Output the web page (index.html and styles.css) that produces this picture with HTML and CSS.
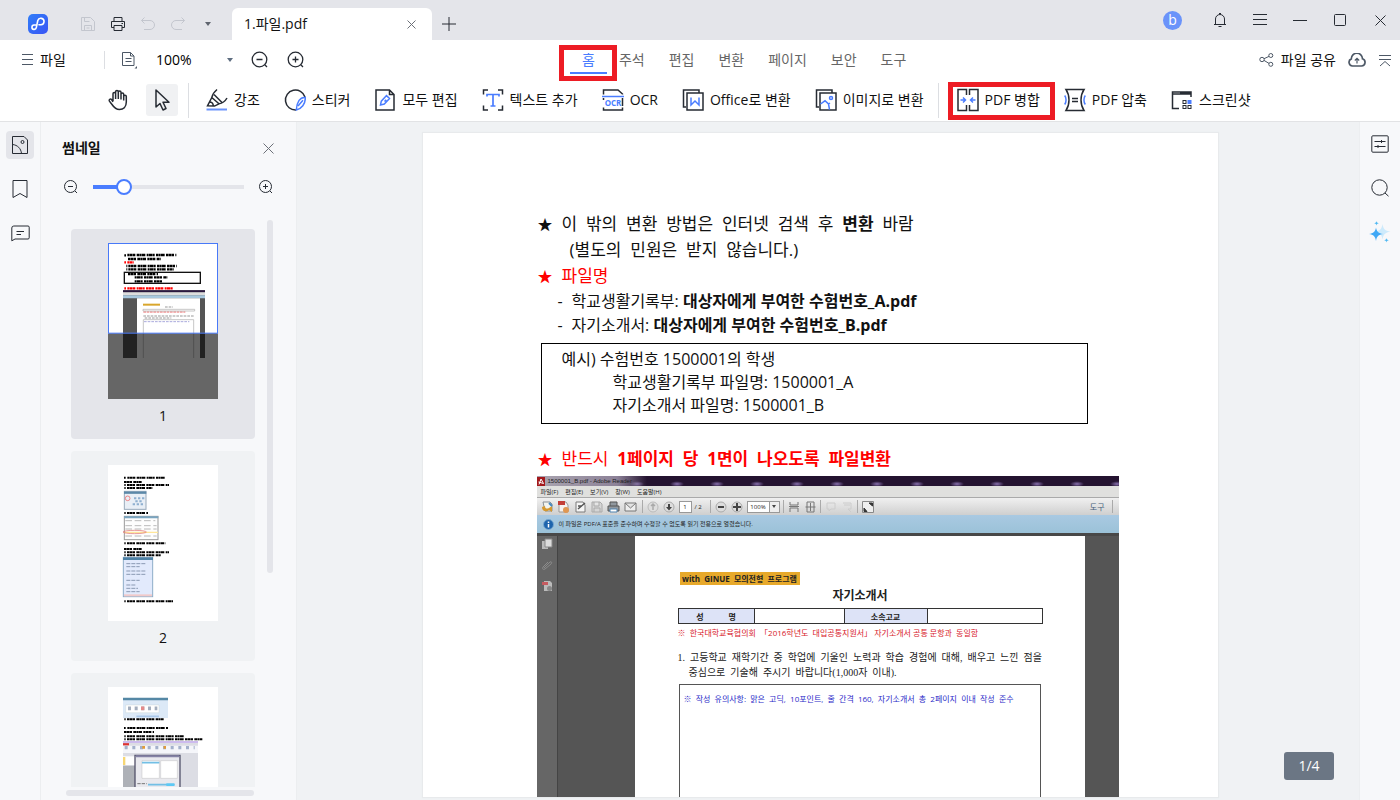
FILE: index.html
```html
<!DOCTYPE html>
<html lang="ko">
<head>
<meta charset="utf-8">
<title>1.파일.pdf</title>
<link rel="stylesheet" href="styles.css">
</head>
<body>
<div class="app">
  <header class="titlebar">
    <div class="quick">
      <svg class="logo" width="20" height="20" viewBox="0 0 20 20"><defs><linearGradient id="lg" x1="0" y1="0" x2="1" y2="1"><stop offset="0" stop-color="#2f7df8"/><stop offset="1" stop-color="#3a55f5"/></linearGradient></defs><rect width="20" height="20" rx="5" fill="url(#lg)"/><path d="M7.800 11H6a2.200 2.200 0 1 0 2.300 2.600L9.800 6.500a3.200 3.200 0 1 1 3.200 4.200H11" fill="none" stroke="#fff" stroke-width="1.600" stroke-linecap="round"/></svg>
      <button class="qbtn" aria-label="저장"><svg width="16" height="16" viewBox="0 0 16 16" class="faint"><path d="M1.500 14.500v-13h9l4 4v9zM4.500 1.500v4h5M4.500 14.500v-5h7v5M6.500 12h3"/></svg></button>
      <button class="qbtn" aria-label="인쇄"><svg width="16" height="16" viewBox="0 0 16 16" class="dark"><path d="M4 5V1.500h8V5M4 11.500H1.500V5.500h13v6H12M4 9.500h8v5H4zM11.500 7.500h1.500"/></svg></button>
      <button class="qbtn" aria-label="실행 취소"><svg width="16" height="16" viewBox="0 0 16 16" class="faint"><path d="M4.500 1.500 1.500 4.500l3 3M1.500 4.500H10a4 4 0 0 1 0 9H4"/></svg></button>
      <button class="qbtn" aria-label="다시 실행"><svg width="16" height="16" viewBox="0 0 16 16" class="faint"><path d="m11.500 1.500 3 3-3 3M14.500 4.500H6a4 4 0 0 0 0 9h6"/></svg></button>
      <button class="qbtn" aria-label="더 보기"><svg width="6" height="4" viewBox="0 0 6 4"><path d="M0 0h6L3 4z" fill="#5e646e"/></svg></button>
    </div>
    <div class="doctab"><span>1.파일.pdf</span><button class="plain" aria-label="탭 닫기"><svg width="9" height="9" viewBox="0 0 9 9" class="grey"><path d="m.5.5 8 8M8.500.5l-8 8"/></svg></button></div>
    <button class="newtab" aria-label="새 탭"><svg width="14" height="14" viewBox="0 0 14 14" class="dark"><path d="M7 0v14M0 7h14"/></svg></button>
    <div class="winbtns">
      <button class="avatar">b</button>
      <button class="wbtn" aria-label="알림"><svg width="14" height="16" viewBox="0 0 14 16" class="dark"><path d="M2.500 12.500V7a4.500 4.500 0 0 1 9 0v5.500M1 12.500h12M5.500 14.500h3M6 1.500h2"/></svg></button>
      <button class="wbtn" aria-label="메뉴"><svg width="14" height="12" viewBox="0 0 14 12" class="dark"><path d="M0 .5h14M0 5.500h14M0 10.500h14"/></svg></button>
      <button class="wbtn" aria-label="최소화"><svg width="14" height="12" viewBox="0 0 14 12" class="dark"><path d="M0 6.500h14"/></svg></button>
      <button class="wbtn" aria-label="최대화"><svg width="12" height="12" viewBox="0 0 12 12" class="dark"><rect x=".5" y=".5" width="11" height="11" rx="1"/></svg></button>
      <button class="wbtn" aria-label="닫기"><svg width="11" height="11" viewBox="0 0 11 11" class="dark"><path d="m.5.5 10 10M10.500.5l-10 10"/></svg></button>
    </div>
  </header>

  <div class="menurow">
    <div class="menuleft">
      <button class="filebtn"><svg width="11" height="12" viewBox="0 0 11 12" class="slate"><path d="M0 .5h11M0 5.500h11M0 10.500h11"/></svg>파일</button>
      <span class="vline"></span>
      <button class="plain viewmode" aria-label="보기"><svg width="17" height="18" viewBox="0 0 17 18" class="slate"><path d="M1.500 1.500h8l3.500 3.500v9.500h-11.500zM9.500 1.500V5H13M4.500 7.500h6M4.500 10.500h6"/><path d="M16 15v2.500h-2.500z" fill="#4d5866" stroke="none"/></svg></button>
      <span class="zoombox"><select aria-label="배율"><option>100%</option></select><svg width="6" height="4" viewBox="0 0 6 4"><path d="M0 0h6L3 4z" fill="#5e6d80"/></svg></span>
      <button class="plain zbtn" aria-label="축소"><svg width="18" height="18" viewBox="0 0 18 18" class="dark z"><circle cx="8.500" cy="8.500" r="7.300"/><path d="M5.500 8.500h6M13.800 13.800 16 16"/></svg></button>
      <button class="plain zbtn" aria-label="확대"><svg width="18" height="18" viewBox="0 0 18 18" class="dark z"><circle cx="8.500" cy="8.500" r="7.300"/><path d="M5.500 8.500h6M8.500 5.500v6M13.800 13.800 16 16"/></svg></button>
    </div>
    <nav class="tabs">
      <button class="tab active">홈<span class="mark"></span></button>
      <button class="tab">주석</button>
      <button class="tab">편집</button>
      <button class="tab">변환</button>
      <button class="tab">페이지</button>
      <button class="tab">보안</button>
      <button class="tab">도구</button>
    </nav>
    <div class="menuright">
      <button class="share"><svg width="15" height="14" viewBox="0 0 15 14" class="slate"><circle cx="3" cy="6.500" r="2.200"/><circle cx="11.800" cy="2.500" r="2"/><circle cx="11.800" cy="11.300" r="2"/><path d="m5 5.700 5-2.300M5 7.400l5 3"/></svg>파일 공유</button>
      <button class="plain" aria-label="클라우드"><svg width="18" height="14" viewBox="0 0 18 14" class="cloud"><path d="M4.500 13A3.700 3.700 0 0 1 3.300 5.900 5.600 5.600 0 0 1 14.500 5.800 3.700 3.700 0 0 1 13.500 13z"/><path d="M9 10.500v-5M6.800 7.500 9 5.300l2.200 2.200" stroke-width="1.200"/></svg></button>
      <button class="plain" aria-label="리본 접기"><svg width="14" height="13" viewBox="0 0 14 13" class="slate"><path d="M1 1.500h12M1 5.500h12M2 12l5-4.500 5 4.500"/></svg></button>
    </div>
  </div>

  <div class="toolrow">
    <button class="mode" aria-label="손 도구"><svg width="22" height="22" viewBox="0 0 22 22" class="dark t"><path d="M6 12V4.800a1.300 1.300 0 0 1 2.600 0V10 2.800a1.300 1.300 0 0 1 2.700 0V10 3.300a1.300 1.300 0 0 1 2.700 0V10.500 5.300a1.300 1.300 0 0 1 2.700 0V11.500M16.700 7.500a1.300 1.300 0 0 1 2.600 0V13c0 5-3 7.500-6.800 7.500-4 0-5.500-2-7.500-5l-2.600-3.400c-.9-1.400 1-2.700 2.200-1.600L6 12.800"/></svg></button>
    <button class="mode on" aria-label="선택 도구"><svg width="20" height="24" viewBox="0 0 20 24" class="dark t"><path d="M4 2v17l4-3.500 3 6.500 3-1.500-3-6.300h6z" stroke-linejoin="round"/></svg></button>
    <span class="vline tall"></span>
    <div class="tools">
      <button class="tool"><svg width="22" height="24" viewBox="0 0 22 24" class="dark t"><path d="M11 1.500C8 4 6.500 6.500 5.800 9.500L13 15.800c3-.3 6-2.300 8-5.800M5.800 9.500 1.500 17.800l7 .3 4.500-2.300M8 6.500l8 8M4 14c2 .3 3.300 1.800 3.300 4"/><path d="M.5 21.500h20.500" stroke="#6a93fa" stroke-width="2"/></svg>강조</button>
      <button class="tool"><svg width="22" height="24" viewBox="0 0 22 24" class="dark t"><path d="M21 9A10 10 0 1 0 12 22"/><path d="M21.300 9.500c-5-.8-8.600 4.500-9 12.400C17.500 21 21.500 16 21.300 9.500zM14 18l5-5.800" stroke="#4a7dff"/></svg>스티커</button>
      <button class="tool"><svg width="22" height="24" viewBox="0 0 22 24" class="dark t"><path d="M2 2h13.500L20 6.500V22H2zM15.500 2v4.500H20"/><path d="m6.500 17 .8-3.800 5.200-5.600 3 2.900-5.200 5.600zM10.500 13.500l1.700-1.800" stroke="#4a7dff"/></svg>모두 편집</button>
      <button class="tool"><svg width="22" height="24" viewBox="0 0 22 24" class="dark t"><path d="M6 2H1.500v4.500M16 2h4.500v4.500M6 22H1.500v-4.500M16 22h4.500v-4.500"/><path d="M5 8.500v-2h12v2M11 6.500V18M8.500 18h5" stroke="#4a7dff" stroke-width="1.700"/></svg>텍스트 추가</button>
      <button class="tool"><svg width="22" height="24" viewBox="0 0 22 24" class="dark t"><path d="M1.500 6.500V2H16l4.500 4v.5M1.500 19.500V22h19v-2.500M1.500 10v2M20.500 10v8"/><path d="M0 8.500h22" stroke="#4a7dff"/><text x="11" y="17.500" text-anchor="middle" class="ocr">OCR</text></svg>OCR</button>
      <button class="tool"><svg width="22" height="24" viewBox="0 0 22 24" class="dark t"><path d="M4 19H1.500V2H17v2.500M5 5h16v17H5z"/><path d="M9 9.500V17l4-4 4 4V9.500" stroke="#4a7dff"/></svg>Office로 변환</button>
      <button class="tool"><svg width="22" height="24" viewBox="0 0 22 24" class="dark t"><path d="M4 19H1.500V2H17v2.500M5 5h16v17H5z"/><path d="M5.500 16 10 12.800l3.500 3.200 1 5.500M13.500 16l1.500-1" stroke="#4a7dff"/><circle cx="16" cy="10" r="1.500" stroke="#4a7dff"/></svg>이미지로 변환</button>
    </div>
    <span class="vline tall"></span>
    <div class="tools second">
      <button class="tool merge"><svg width="22" height="24" viewBox="0 0 22 24" class="dark t"><path d="M9.500 7V1.500H1v21h8.500V17M12.500 7V1.500H21v21h-8.500V17"/><path d="M3.500 12h5M6 9.500 8.500 12 6 14.500M18.500 12h-5M16 9.500 13.500 12l2.500 2.500" stroke="#4a7dff"/></svg>PDF 병합<span class="mark"></span></button>
      <button class="tool"><svg width="22" height="24" viewBox="0 0 22 24" class="dark t"><path d="M2 1.500h18c-4 6-4 15 0 21H2c4-6 4-15 0-21zM8 10.500h6M8 13.500h6"/><path d="M.7 7.500c1.800 2.500 1.800 6.500 0 9M21.300 7.500c-1.800 2.500-1.800 6.500 0 9" stroke="#4a7dff"/></svg>PDF 압축</button>
      <button class="tool"><svg width="22" height="24" viewBox="0 0 22 24" class="dark t"><path d="M8 20.500H1.500V4h18.500v5M1.500 6h18.500"/><path d="M9 5h11" stroke-width="2"/><g stroke-width="1"><rect x="12" y="12.500" width="3" height="3"/><rect x="12" y="17.500" width="3" height="3"/><rect x="17" y="17.500" width="3" height="3"/></g><rect x="16.500" y="12" width="4" height="4" fill="#4a7dff" stroke="none"/></svg>스크린샷</button>
    </div>
  </div>

  <main class="body">
    <aside class="rail">
      <button class="rbtn on" aria-label="썸네일"><svg width="18" height="20" viewBox="0 0 18 20" class="dark"><path d="M1.500 1.500H13L16.500 5v13.500h-15zM1.500 9.500c5 .5 8.500 4 9 9"/><circle cx="11.500" cy="7" r="1.500"/></svg></button>
      <button class="rbtn" aria-label="책갈피"><svg width="18" height="20" viewBox="0 0 18 20" class="dark"><path d="M2 1.500h14v17l-7-4-7 4z"/></svg></button>
      <button class="rbtn" aria-label="주석"><svg width="19" height="17" viewBox="0 0 19 17" class="dark"><path d="M.8 15.800V3a2 2 0 0 1 2-2H17a1.200 1.200 0 0 1 1.200 1.200v10.600A1.200 1.200 0 0 1 17 14H4zM5.500 6.500H13M5.500 9.500H10"/></svg></button>
    </aside>
    <section class="panel">
      <div class="phead"><h2>썸네일</h2><button class="plain" aria-label="패널 닫기"><svg width="11" height="11" viewBox="0 0 11 11" class="grey"><path d="m.5.5 10 10M10.500.5l-10 10"/></svg></button></div>
      <div class="pslide">
        <button class="plain" aria-label="썸네일 축소"><svg width="16" height="16" viewBox="0 0 16 16" class="dark"><circle cx="7.500" cy="7.500" r="6"/><path d="M5 7.500h5M12 12l2 2"/></svg></button>
        <input type="range" aria-label="썸네일 크기" min="0" max="100" value="17">
        <button class="plain" aria-label="썸네일 확대"><svg width="16" height="16" viewBox="0 0 16 16" class="dark"><circle cx="7.500" cy="7.500" r="6"/><path d="M5 7.500h5M7.500 5v5M12 12l2 2"/></svg></button>
      </div>
      <div class="plist">
        <div class="card on">
          <svg width="110" height="156" viewBox="0 0 330 468">
            <rect width="330" height="468" fill="#fff"/>
            <g fill="none" stroke="#000" stroke-width="7" stroke-dasharray="6 1 9 1 7 4 8 1 5 1 11 4"><path d="M58 36h147M60 48h98M61 69h146M61 79h136M60 93h90M80 103h98M80 115h86"/><path d="M49 37h5M55 69h3M55 79h3"/></g>
            <g fill="none" stroke="red" stroke-width="7"><path d="M58 58h19M49 58h5M58 136h137M49 136h5" stroke-dasharray="6 1 9 1 7 4"/></g>
            <rect x="49" y="88" width="228" height="33" fill="none" stroke="#111" stroke-width="4"/>
            <path d="M45 142h246v203H45z" fill="#555"/><path d="M45 142h246v6H45z" fill="#2b1840"/><path d="M45 148h246v9H45z" fill="#ddd"/><path d="M45 157h246v9H45z" fill="#a8c8de"/>
            <path d="M87 166h189v179H87z" fill="#fff"/><path d="M105 182h51v6h-51z" fill="#d9a62c"/>
            <path d="M106 207h126" stroke="#e66" stroke-width="3" stroke-dasharray="8 2"/><path d="M106 219h152M110 225h80M171 192h24" stroke="#999" stroke-width="3" stroke-dasharray="8 3"/><path d="M108 236h136" stroke="#aad" stroke-width="3" stroke-dasharray="8 3"/>
            <path d="M105 199h155v5H105zM106 345V230h151v115" fill="none" stroke="#aaa" stroke-width="2"/>
            <path d="M0 271h330v197H0z" fill="#000" fill-opacity=".6"/>
            <rect x="1.500" y="1.500" width="327" height="269" fill="none" stroke="#4879f8" stroke-width="3"/>
          </svg>
          <span>1</span>
        </div>
        <div class="card">
          <svg width="110" height="156" viewBox="0 0 330 468">
            <rect width="330" height="468" fill="#fff"/>
            <g fill="none" stroke="#000" stroke-width="6" stroke-dasharray="6 1 9 1 7 4 8 1 5 1 11 4"><path d="M58 38h114M48 51h53M57 60h126M57 69h76M57 144h63M57 235h117M48 252h53M57 262h126M57 271h102M57 409h138"/></g>
            <path d="M48 38h5M49 60h4M49 69h4M49 144h4M49 235h4M49 262h4M49 271h4M49 409h4" stroke="#000" stroke-width="6"/>
            <rect x="49" y="79" width="65" height="54" fill="#e9eff6" stroke="#9ab" stroke-width="3"/><path d="M48 83h67" stroke="#5b88a8" stroke-width="7"/><circle cx="59" cy="100" r="7" fill="none" stroke="#e55" stroke-width="2"/><path d="M78 100h32M74 118h36M82 109h24" stroke="#8fb0d0" stroke-width="6" stroke-dasharray="7 5"/>
            <rect x="49" y="154" width="101" height="70" fill="#fdfdfd" stroke="#999" stroke-width="3"/><path d="M48 157h103" stroke="#7aa5c0" stroke-width="6"/><path d="M52 182h94M52 192h94M52 213h94M52 167h90" stroke="#999" stroke-width="2" stroke-dasharray="20 8"/><path d="M50 202h100" stroke="#ffe69a" stroke-width="4"/><ellipse cx="80" cy="201" rx="35" ry="5" fill="none" stroke="#d66" stroke-width="2"/>
            <rect x="46" y="277" width="88" height="118" fill="#e2eafc" stroke="#8eadc8" stroke-width="3"/><path d="M45 281h90" stroke="#4d81a5" stroke-width="8"/><path d="M55 296h60M55 305h40M55 318h60M55 328h60M55 346h40M55 360h30M55 370h35M55 380h40" stroke="#8a99b3" stroke-width="3" stroke-dasharray="12 3"/><path d="M48 391h84" stroke="#f1caca" stroke-width="6"/>
          </svg>
          <span>2</span>
        </div>
        <div class="card">
          <svg width="110" height="156" viewBox="0 0 330 468">
            <rect width="330" height="468" fill="#fff"/>
            <path d="M45 33h135v60H45z" fill="#dce9f7"/><path d="M45 36h135" stroke="#5588a5" stroke-width="7"/><path d="M53 54h100v23H53z" fill="#fff" stroke="#bcc"/><path d="M60 64h88" stroke="#a3adbd" stroke-width="11" stroke-dasharray="9 11"/><path d="M99 64h10" stroke="#e38a8a" stroke-width="11"/><path d="M85 88h68" stroke="#aac8ea" stroke-width="5"/>
            <g fill="none" stroke="#000" stroke-width="6" stroke-dasharray="6 1 9 1 7 4 8 1 5 1 11 4"><path d="M57 97h110M58 123h123M48 135h90M57 148h174M57 157h226"/></g>
            <path d="M49 97h4M48 123h5M49 148h4M49 157h4" stroke="#000" stroke-width="6"/>
            <path d="M45 162h225v140H45z" fill="#dcdde4"/><path d="M45 165h225" stroke="#cdbbee" stroke-width="6"/><path d="M45 172h18" stroke="#d33" stroke-width="7"/><path d="M45 176h225v22H45z" fill="#f5f6fa"/><path d="M50 182h210" stroke="#a3b0cb" stroke-width="10" stroke-dasharray="9 14"/><path d="M103 181h8M167 181h7" stroke="#e29b37" stroke-width="8"/>
            <path d="M45 208h36v27H45z" fill="#fff"/><path d="M45 210h7v24h-7z" fill="#f7d774"/><path d="M45 236h36v64H45z" fill="#aeb1b7"/><path d="M81 205h135v97H81z" fill="#e9e9ee" stroke="#55546c" stroke-width="4"/><path d="M83 208h131" stroke="#8683a6" stroke-width="6"/><path d="M102 221h52v53h-52zM158 221h50v53h-50z" fill="#fff" stroke="#aaa"/><path d="M102 227h52M120 293h80" stroke="#72bfe5" stroke-width="5"/><path d="M88 290h28" stroke="#777" stroke-width="3" stroke-dasharray="10 3"/><path d="M175 293h24" stroke="#5cc9f5" stroke-width="8"/>
          </svg>
        </div>
      </div>
      <span class="vbar"></span><span class="hbar"></span>
    </section>

    <section class="viewer">
      <article class="page">
        <p class="l1"><span class="star">★</span>이  밖의  변환  방법은  인터넷  검색  후  <b>변환</b>  바람</p>
        <p class="l1 sub">(별도의  민원은  받지  않습니다.)</p>
        <p class="l1 red"><span class="star">★</span>파일명</p>
        <p class="l2"><span class="dash">-</span>학교생활기록부: <b>대상자에게 부여한 수험번호_A.pdf</b></p>
        <p class="l2"><span class="dash">-</span>자기소개서: <b>대상자에게 부여한 수험번호_B.pdf</b></p>
        <div class="example">
          <p>예시) 수험번호 1500001의 학생</p>
          <p class="in">학교생활기록부 파일명: 1500001_A</p>
          <p class="in">자기소개서 파일명: 1500001_B</p>
        </div>
        <p class="l1 red must"><span class="star">★</span>반드시  <b>1페이지  당  1면이  나오도록  파일변환</b></p>

        <div class="shot">
          <div class="stitle"><svg width="8" height="9" viewBox="0 0 8 9"><path d="M0 0h8v9H0z" fill="#a3191c"/><path d="M2 7.500 4 2l2.500 4.500L1.500 5" fill="none" stroke="#fff"/></svg>1500001_B.pdf - Adobe Reader</div>
          <div class="smenu"><span>파일(F)</span><span>편집(E)</span><span>보기(V)</span><span>창(W)</span><span>도움말(H)</span></div>
          <div class="stools">
            <svg width="98" height="14" viewBox="0 0 98 14" fill="none"><path d="M2 2h7l2 2v7H4z" fill="#f3f4ee" stroke="#8a8f94"/><path d="M1 7c0 5 5 5 7 3l3 2V6L8 8C6 9 4 9 4 6z" fill="#d5982f"/><path d="M8 3l3 3" stroke="#4488c0" stroke-width="2"/><path d="M18 2h7l2 3v7h-9z" fill="#f6f1ee" stroke="#999"/><path d="M17 1h7v4h-7z" fill="#c33e38"/><circle cx="25" cy="10" r="3" fill="#e09752"/><path d="M35 2h7l2 3v7h-9z" fill="#f5f5f5" stroke="#7a7a7a"/><path d="m37 9 7-6M37 6h4" stroke="#555" stroke-width="1.500"/><path d="M51 2h8l2 2v8H51zM53 2v4h5V2M53 12V8h6v4" fill="#d5d5d5" stroke="#aaa"/><path d="M67 6h11v5H67zM69 6V2h7v4" fill="#90989f" stroke="#555"/><path d="M69 9h7v3h-7z" fill="#fff" stroke="#4f83b0"/><path d="M84 3h11v8H84zM84 3l5.500 5L95 3" fill="#eee" stroke="#777"/></svg>
            <span class="sep"></span>
            <svg width="30" height="14" viewBox="0 0 30 14"><circle cx="7" cy="7" r="5" fill="#dedede" stroke="#bbb"/><path d="M7 4v6M5 6l2-2 2 2" fill="none" stroke="#aaa" stroke-width="1.500"/><circle cx="23" cy="7" r="5" fill="#ddd" stroke="#aaa"/><path d="M22 4h2v3h2l-3 3.500L20 7h2z" fill="#444"/></svg>
            <span class="num">1</span><span class="of">/ 2</span>
            <span class="sep"></span>
            <svg width="30" height="14" viewBox="0 0 30 14"><circle cx="7" cy="7" r="5" fill="#ddd" stroke="#aaa"/><path d="M4 7h6" stroke="#444" stroke-width="2"/><circle cx="23" cy="7" r="5" fill="#ddd" stroke="#aaa"/><path d="M19 7h8M23 3v8" stroke="#444" stroke-width="2"/></svg>
            <span class="pct">100%</span><span class="drop"><svg width="4" height="3" viewBox="0 0 4 3"><path d="M0 0h4L2 3z" fill="#444"/></svg></span>
            <span class="sep"></span>
            <svg width="30" height="14" viewBox="0 0 30 14" fill="none" stroke="#777"><path d="M3 2v3h8V2M3 12V8h8v4M2 6.500h10M20 2h7v10h-7zM18.500 7h10M23.500 3v8"/></svg>
            <span class="sep"></span>
            <svg width="30" height="14" viewBox="0 0 30 14" fill="none" stroke="#ccc"><path d="M3 3h8v6H7l-2 2V9H3zM19 3h8v6h-3l3 3M20 5h6"/></svg>
            <span class="sep"></span>
            <svg width="14" height="14" viewBox="0 0 14 14"><path d="M1.500 1.500h11v11h-11z" fill="#eee" stroke="#888"/><path d="M8 3h3.500v3zM3 8v3.500h3z" fill="#333" stroke="#333"/></svg>
            <span class="stool">도구</span><span class="sep"></span>
          </div>
          <div class="sinfo"><svg width="11" height="11" viewBox="0 0 11 11"><circle cx="5.500" cy="5.500" r="5" fill="#1d64ad" stroke="#7aa9d0"/><path d="M5.500 5v3.500M5.500 2.500V4" stroke="#fff" stroke-width="1.500"/></svg>이 파일은 PDF/A 표준을 준수하며 수정할 수 없도록 읽기 전용으로 열렸습니다.</div>
          <div class="sbody">
            <div class="sside">
              <svg width="12" height="12" viewBox="0 0 12 12"><path d="M1 3h6v8H1z" fill="#bbb"/><path d="M4 1h7v8H4z" fill="#ddd" stroke="#888"/></svg>
              <svg width="12" height="12" viewBox="0 0 12 12" fill="none" stroke="#8b8b8b"><path d="m3 9 6-6c2-1 2 1 1 2l-6 5c-2 1-3 0-2-2l5-5"/></svg>
              <svg width="12" height="12" viewBox="0 0 12 12"><path d="M3 1h6l2 2v8H3z" fill="#bbb"/><path d="M1 2h6v3H1z" fill="#c65b60"/><circle cx="8.500" cy="8.500" r="2.500" fill="#888"/></svg>
            </div>
            <div class="form">
              <span class="badge">with  GINUE  모의전형  프로그램</span>
              <h3>자기소개서</h3>
              <table><tr><th>성            명</th><td></td><th>소속고교</th><td></td></tr></table>
              <p class="rnote">※  한국대학교육협의회  「2016학년도  대입공통지원서」 자기소개서 공통 문항과  동일함</p>
              <p class="q">1.  고등학교  재학기간  중  학업에  기울인  노력과  학습  경험에  대해,  배우고  느낀  점을</p>
              <p class="q q2">중심으로  기술해  주시기  바랍니다(1,000자  이내).</p>
              <div class="answer">※  작성  유의사항:  맑은  고딕,  10포인트,  줄  간격  160,  자기소개서  총  2페이지  이내  작성  준수</div>
            </div>
          </div>
        </div>
      </article>
      <span class="counter">1/4</span>
    </section>

    <aside class="rail right">
      <button class="rbtn" aria-label="속성"><svg width="18" height="18" viewBox="0 0 18 18" class="dark"><rect x=".8" y=".8" width="16.400" height="16.400" rx="1"/><path d="M3.500 6.500h11M10.500 5v3M3.500 11.500h11M7 10v3"/></svg></button>
      <button class="rbtn" aria-label="검색"><svg width="18" height="18" viewBox="0 0 18 18" class="dark"><circle cx="8.500" cy="8.500" r="7.700"/><path d="m14 14 3.500 3.200"/></svg></button>
      <button class="rbtn" aria-label="AI"><svg width="22" height="22" viewBox="0 0 22 22"><path d="M13.500 3c.8 5 2.500 7 8 7.500-5.500 1-7.200 3-8 8-.8-5-2.500-7-8-8 5.500-.5 7.200-2.500 8-7.500z" fill="#cdeafb"/><path d="M7 6.500c.7 4 2.500 5.800 7 6.500-4.500.7-6.300 2.500-7 7-.7-4.500-2.500-6.300-7-7 4.500-.7 6.300-2.500 7-6.500z" fill="#3fa8f5"/><path d="M7.500 0c.3 1.500.8 2 2.500 2.300-1.700.3-2.200.8-2.500 2.200-.3-1.400-.8-1.900-2.500-2.200C6.700 2 7.200 1.500 7.500 0zM17.500 17c.3 1.500.8 2 2.500 2.300-1.700.3-2.200.8-2.500 2.200-.3-1.400-.8-1.900-2.500-2.200 1.700-.3 2.200-.8 2.500-2.300z" fill="#4fb8f2"/></svg></button>
    </aside>
  </main>
</div>
</body>
</html>
```
FILE: styles.css
```css
* { box-sizing: border-box; }
body { margin: 0; font: 14px/20px "Open Sans", "Noto Sans CJK KR", sans-serif; color: #111; }
button { font: inherit; color: inherit; border: 0; background: none; padding: 0; display: flex; align-items: center; justify-content: center; white-space: nowrap; }
p, h2, h3 { margin: 0; }
svg { display: block; flex: none; }
.dark, .faint, .grey, .slate, .cloud { fill: none; stroke: #262b33; }
.t { stroke-width: 1.5; }
.z { stroke-width: 1.3; }
.faint { stroke: #c3c6ce; }
.grey { stroke: #6c7078; }
.slate { stroke: #4d5866; }
.cloud { stroke: #4d5866; stroke-width: 1.7; }
.ocr { font: bold 8px "Open Sans", sans-serif; fill: #4a7dff; stroke: none; }

.app { height: 100vh; display: flex; flex-direction: column; overflow: hidden; background: #fff; }

.titlebar { height: 40px; flex: none; display: flex; background: #e4e5ea; }
.quick { width: 232px; flex: none; display: flex; align-items: center; padding: 8px 0 0 28px; }
.logo { margin-right: 25px; }
.qbtn { width: 30px; height: 30px; flex: none; }
.doctab { width: 200px; margin-top: 8px; padding: 0 16px 0 12px; background: #fff; border-radius: 6px 6px 0 0; display: flex; align-items: center; justify-content: space-between; }
.newtab { width: 34px; padding-top: 8px; }
.winbtns { margin-left: auto; display: flex; align-items: center; }
.wbtn { width: 40px; height: 40px; }
.avatar { width: 19px; height: 19px; border-radius: 50%; background: #6a93fa; color: #fff; margin-right: 18px; }

.menurow { height: 40px; flex: none; display: grid; grid-template-columns: 570px auto 1fr; align-items: center; }
.menuleft { display: flex; align-items: center; padding-left: 22px; }
.filebtn { width: 82px; justify-content: flex-start; gap: 7px; }
.vline { width: 1px; height: 18px; background: #dcdee2; }
.viewmode { margin-left: 16px; }
.zoombox { display: flex; align-items: center; width: 77px; margin: 0 18px; }
.zoombox select { appearance: none; border: 0; padding: 0; background: none; font: inherit; color: #000; width: 71px; }
.zbtn { margin-right: 18px; }
.tabs { display: flex; height: 40px; }
.tab { position: relative; padding: 0 12px; color: #666; }
.tab.active { color: #4a7dff; box-shadow: inset 0 -6px #fff, inset 0 -8px #4a7dff; }
.mark { position: absolute; border: 5px solid #ed1c24; pointer-events: none; }
.tab .mark { inset: 5px -10px -1px -11px; }
.menuright { display: flex; align-items: center; justify-content: flex-end; gap: 12px; padding-right: 8px; }
.share { gap: 7px; }

.toolrow { height: 42px; flex: none; display: flex; align-items: center; padding: 0 8px 1px 102px; border-bottom: 1px solid #e2e3e5; }
.mode { width: 32px; height: 32px; border-radius: 3px; margin-right: 12px; }
.mode.on { background: #f0f1f3; margin-right: 10px; }
.vline.tall { height: 35px; }
.tools { display: flex; gap: 24px; padding: 0 14px 0 17px; }
.tools.second { padding-left: 18px; }
.tool { position: relative; gap: 6px; height: 34px; }
.merge .mark { inset: -1px -15px -3px -9px; }

.body { flex: 1; min-height: 0; display: flex; background: #f0f2f4; }
.rail { width: 41px; flex: none; background: #f7f8fa; border-right: 1px solid #eceef0; display: flex; flex-direction: column; align-items: center; gap: 16px; padding-top: 9px; }
.rail.right { border-right: 0; border-left: 1px solid #eceef0; padding-top: 8px; }
.rbtn { width: 28px; height: 28px; border-radius: 4px; }
.rbtn.on { background: #e4e5ea; }

.panel { position: relative; width: 256px; flex: none; background: #f7f8fa; border-right: 1px solid #eceef0; display: flex; flex-direction: column; }
.phead { display: flex; justify-content: space-between; align-items: center; padding: 16px 22px 0 21px; }
h2 { font-size: 14px; line-height: 20px; }
.pslide { display: flex; align-items: center; gap: 14px; padding: 21px 22px 0 22px; }
input[type=range] { appearance: none; flex: 1; min-width: 0; height: 16px; margin: 0; background: linear-gradient(90deg, #4a7dff 20%, #e4e5ea 20%) center / 100% 4px no-repeat; border-radius: 2px; }
input[type=range]::-webkit-slider-thumb { appearance: none; width: 16px; height: 16px; border: 2px solid #4a7dff; border-radius: 50%; background: #fff; }
.plist { flex: 1; min-height: 0; overflow: hidden; display: flex; flex-direction: column; gap: 12px; margin: 34px 41px 13px 30px; }
.card { height: 210px; flex: none; border-radius: 4px; background: #f0f2f4; padding-top: 14px; display: flex; flex-direction: column; align-items: center; gap: 7px; }
.card.on { background: #e4e5ea; }
.vbar, .hbar { position: absolute; background: #e4e5ea; border-radius: 3px; }
.vbar { right: 23px; top: 98px; width: 6px; height: 353px; }
.hbar { left: 25px; right: 42px; bottom: 4px; height: 6px; }

.viewer { position: relative; flex: 1; min-width: 0; overflow: hidden; padding: 11px 16px 3px 0; display: flex; justify-content: center; }
.page { width: 795px; background: #fff; padding: 78px 99px 0 115px; overflow: hidden; box-shadow: 0 0 1px 1px #e8eaec; }
.page p, .page th, .badge, .answer { white-space: pre; }
.l1 { font-size: 17px; line-height: 26px; }
.l2 { font-size: 16px; line-height: 24px; padding-left: 20px; }
.sub { padding-left: 32px; }
.red { color: #f00; }
.star { display: inline-block; width: 24px; font-size: 15px; line-height: 20px; font-family: "Noto Sans CJK KR", sans-serif; }
.dash { display: inline-block; width: 14px; }
.example { width: 547px; margin: 6px 0 22px 3px; border: 1px solid #000; padding: 4px 0 6px 20px; font-size: 16px; line-height: 23px; }
.example .in { padding-left: 51px; }

.shot { margin: 4px 0 0 -1px; font-size: 6px; line-height: 10px; color: #222; }
.stitle { height: 10px; display: flex; align-items: center; gap: 3px; font-family: "Liberation Sans", sans-serif; background: linear-gradient(90deg, #aaa5b0 0, #8d8298 80px, transparent 110px), radial-gradient(ellipse at 50% 80%, #8a72b0 0, #241330 7px) 0 0 / 40px 10px; }
.smenu { height: 12px; display: flex; align-items: center; gap: 7px; padding-left: 4px; background: #e0e0de; border-bottom: 1px solid #aaa; }
.stools { height: 17px; display: flex; align-items: center; gap: 3px; padding: 0 6px 0 4px; background: linear-gradient(#f0f0f0, #cfcfcf); }
.sep { width: 1px; height: 13px; background: #aaa; }
.num, .pct { border: 1px solid #999; background: #fff; height: 12px; text-align: center; }
.num { width: 13px; }
.of { width: 12px; }
.pct { width: 23px; }
.drop { height: 12px; width: 11px; margin-left: -4px; border: 1px solid #999; background: #eee; display: grid; place-items: center; }
.stool { margin-left: auto; font-size: 8px; color: #47627c; padding-right: 4px; }
.sinfo { height: 21px; display: flex; align-items: center; gap: 5px; padding-left: 6px; background: linear-gradient(#a9c9e2, #9bc2d8); border-bottom: 3px solid #484848; }
.sbody { height: 380px; display: flex; background: #555; padding-right: 34px; }
.sside { width: 21px; flex: none; background: #666; border-right: 1px solid #444; display: flex; flex-direction: column; align-items: center; gap: 9px; padding-top: 2px; }
.form { flex: 1; margin-left: 77px; background: #fff; padding: 36px 42px 0 43px; }
.badge { display: block; width: 120px; margin-left: 2px; background: #e7a92b; font-size: 8px; line-height: 13px; font-weight: bold; text-align: center; }
h3 { font-size: 12px; line-height: 16px; padding-top: 3px; text-align: center; }
.form table { width: 100%; margin-top: 4px; border-collapse: collapse; table-layout: fixed; font-size: 8px; line-height: 13px; }
.form th, .form td { border: 1px solid #333; padding: 0; height: 15px; }
.form th { background: #dde3f7; }
.form th:first-child { width: 76px; }
.form td:nth-child(2) { width: 90px; }
.form th:nth-child(3) { width: 83px; }
.rnote { font-size: 8px; line-height: 12px; margin-top: 3px; color: #d8202a; }
.q { font: 10px/15px "Liberation Serif", "Noto Sans CJK KR", serif; margin-top: 11px; }
.q2 { margin: 0 0 4px 11px; }
.answer { height: 200px; margin: 0 2px 0 1px; border: 1px solid #555; padding: 8px 4px; font-size: 8px; line-height: 12px; color: #2a2ac8; }

.counter { position: absolute; right: 25px; bottom: 20px; width: 50px; height: 28px; border-radius: 3px; background: #6b7684; color: #fff; line-height: 28px; text-align: center; }
```
